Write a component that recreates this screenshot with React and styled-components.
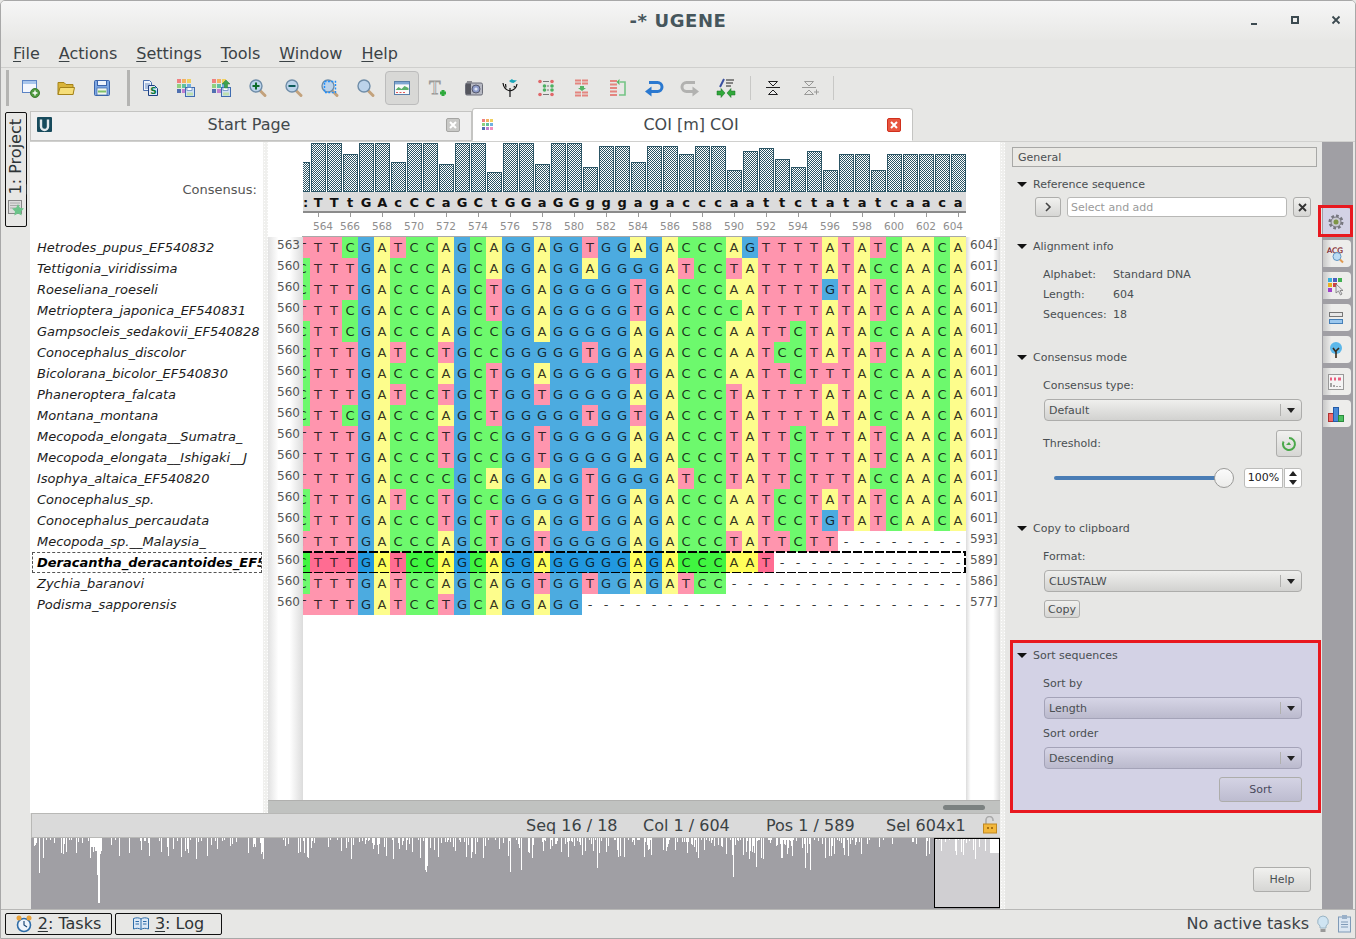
import React from "react";
import styled, { createGlobalStyle } from "styled-components";

const FONT = `"DejaVu Sans", "Liberation Sans", sans-serif`;

const sequences = [
  { name: "Hetrodes_pupus_EF540832", first: "T", seq: "TTCGATCCAGCAGGAGGTGGAGACCCAGTTTTATATCAACA", start: 563, end: 604 },
  { name: "Tettigonia_viridissima", first: "C", seq: "TTTGACCCAGCAGGAGGAGGGGATCCTATTTTATACCAACA", start: 560, end: 601 },
  { name: "Roeseliana_roeseli", first: "C", seq: "TTTGACCCAGCTGGAGGGGGTGACCCAATTTTGTATCAACA", start: 560, end: 601 },
  { name: "Metrioptera_japonica_EF540831", first: "T", seq: "TTCGACCCAGCTGGAGGGGGTGACCCCATTTTATATCAACA", start: 560, end: 601 },
  { name: "Gampsocleis_sedakovii_EF540828", first: "C", seq: "TTCGACCCAGCCGGAGGGGGAGACCCAATTCTATACCAACA", start: 560, end: 601 },
  { name: "Conocephalus_discolor", first: "C", seq: "TTTGATCCTGCCGGGGGTGGAGACCCAATCCTATATCAACA", start: 560, end: 601 },
  { name: "Bicolorana_bicolor_EF540830", first: "C", seq: "TTTGACCCAGCTGGAGGGGGTGACCCAATTCTTTACCAACA", start: 560, end: 601 },
  { name: "Phaneroptera_falcata", first: "C", seq: "TTTGATCCTGCTGGTGGGGGAGACCCTATTTTATACCAACA", start: 560, end: 601 },
  { name: "Montana_montana", first: "C", seq: "TTCGACCCAGCTGGGGGTGGTGACCCTATTTTATACCAACA", start: 560, end: 601 },
  { name: "Mecopoda_elongata__Sumatra_", first: "T", seq: "TTTGACCCTGCCGGTGGGGGAGACCCTATTCTTTATCAACA", start: 560, end: 601 },
  { name: "Mecopoda_elongata__Ishigaki__J", first: "T", seq: "TTTGACCCTGCCGGTGGGGGAGACCCTATTCTTTATCAACA", start: 560, end: 601 },
  { name: "Isophya_altaica_EF540820", first: "T", seq: "TTTGACCCCGCAGGAGGTGGGGATCCTATTCTTTACCAACA", start: 560, end: 601 },
  { name: "Conocephalus_sp.", first: "C", seq: "TTTGATCCTGCCGGGGGTGGAGACCCAATCCTATATCAACA", start: 560, end: 601 },
  { name: "Conocephalus_percaudata", first: "C", seq: "TTTGACCCTGCTGGAGGTGGAGACCCAATCCTGTATCAACA", start: 560, end: 601 },
  { name: "Mecopoda_sp.__Malaysia_", first: "T", seq: "TTTGACCCAGCTGGTGGGGGAGACCCTATTCTT--------", start: 560, end: 593 },
  { name: "Deracantha_deracantoides_EF5", first: "C", seq: "TTTGATCCAGCAGGAGGGGGAGACCCAAT------------", start: 560, end: 589, selected: true },
  { name: "Zychia_baranovi", first: "C", seq: "TTTGATCCAGCAGGTGGTGGAGATCC---------------", start: 560, end: 586 },
  { name: "Podisma_sapporensis", first: "T", seq: "TTTGATCCTGCAGGAGG------------------------", start: 560, end: 577 },
];

const consensus = "TTtGAcCCaGCtGGaGGgggagacccaattctatatcaaca";
const histogram = [49, 49, 38, 49, 49, 30, 49, 49, 28, 49, 49, 20, 49, 49, 28, 49, 49, 25, 46, 46, 30, 46, 46, 38, 46, 46, 22, 41, 44, 33, 25, 41, 22, 38, 38, 22, 38, 38, 38, 38, 38];

const cellColors = { A: "#fdfd8c", C: "#6df96d", G: "#4cabe0", T: "#ff95ae", "-": "#fff" };
const selectedColors = { A: "#ffff5a", C: "#40f540", G: "#2198e0", T: "#ff6c92", "-": "#fff" };

const GlobalStyle = createGlobalStyle`
  html, body { margin: 0; padding: 0; background: #e7e7e5; overflow: hidden; }
  * { box-sizing: border-box; }
  u { text-underline-offset: 2px; }
`;

const Window = styled.div`
  width: 1356px;
  height: 939px;
  display: flex;
  flex-direction: column;
  background: #e7e7e5;
  border: 1px solid #a8a8a8;
  border-radius: 5px 5px 0 0;
  font-family: ${FONT};
  color: #2e3436;
  overflow: hidden;
`;

const TitleBar = styled.div`
  flex: 0 0 39px;
  display: flex;
  align-items: center;
  justify-content: center;
  position: relative;
  background: linear-gradient(#f6f6f6, #e8e8e6);
  font-size: 18px;
  font-weight: 700;
  letter-spacing: 0.6px;
  color: #46565c;
`;

const WinControls = styled.div`
  position: absolute;
  right: 13px;
  top: 13px;
  display: flex;
  gap: 29px;
`;

const MenuBar = styled.div`
  flex: 0 0 27px;
  display: flex;
  align-items: center;
  padding-left: 12px;
  gap: 19px;
  font-size: 16px;
  color: #3b4245;
`;

const ToolBar = styled.div`
  flex: 0 0 41px;
  display: flex;
  align-items: center;
  padding-left: 5px;
  border-top: 1px solid #cfcfcd;
`;

const Handle = styled.div`
  width: 3px;
  height: 36px;
  background: #b4b4b2;
  margin: ${(p) => p.$margin};
`;

const ToolSep = styled.div`
  width: 1px;
  height: 24px;
  background: #c8c8c6;
  margin: ${(p) => p.$margin};
`;

const ToolButton = styled.div`
  width: 34px;
  height: 34px;
  margin: 0 1px;
  display: flex;
  align-items: center;
  justify-content: center;
  border-radius: 4px;
  border: 1px solid ${(p) => (p.$checked ? "#bcbcbc" : "transparent")};
  background: ${(p) => (p.$checked ? "#d8d8d6" : "transparent")};
`;

const Workspace = styled.div`
  flex: 1;
  display: flex;
  min-height: 0;
`;

const LeftDock = styled.div`
  flex: 0 0 29px;
  padding: 4px 0 0 4px;
`;

const ProjectButton = styled.div`
  width: 22px;
  height: 115px;
  border: 1px solid #111;
  border-radius: 2px;
  display: flex;
  flex-direction: column;
  align-items: center;
  padding-top: 6px;
  gap: 5px;
  background: #e7e7e5;
`;

const VerticalLabel = styled.span`
  writing-mode: vertical-rl;
  transform: rotate(180deg);
  font-size: 16px;
  line-height: 20px;
  color: #2e3436;
`;

const Main = styled.div`
  flex: 1;
  display: flex;
  flex-direction: column;
  min-width: 0;
`;

const TabBar = styled.div`
  flex: 0 0 33px;
  display: flex;
  align-items: flex-end;
`;

const Tab = styled.div`
  width: ${(p) => (p.$active ? "441px" : "442px")};
  height: ${(p) => (p.$active ? "33px" : "30px")};
  display: flex;
  align-items: center;
  padding: ${(p) => (p.$active ? "0 11px 0 7px" : "0 11px 3px 6px")};
  font-size: 16px;
  color: #43494c;
  background: ${(p) => (p.$active ? "#fff" : "#efefef")};
  border: 1px solid #c4c4c2;
  border-bottom: ${(p) => (p.$active ? "1px solid #fff" : "1px solid #c4c4c2")};
  border-radius: ${(p) => (p.$active ? "3px 3px 0 0" : "0")};
`;

const TabLabel = styled.span`
  flex: 1;
  text-align: center;
`;

const CloseBox = styled.div`
  width: 14px;
  height: 14px;
  border-radius: 2px;
  display: flex;
  align-items: center;
  justify-content: center;
  background: ${(p) => (p.$red ? "#e8553f" : "#c9c9c7")};
  border: 1px solid ${(p) => (p.$red ? "#d0301c" : "#a5a5a3")};
`;

const ContentRow = styled.div`
  flex: 1;
  display: flex;
  min-height: 0;
  border-top: 1px solid #d0d0ce;
`;

const Editor = styled.div`
  flex: none;
  width: 970px;
  display: flex;
  flex-direction: column;
`;

const AlignmentArea = styled.div`
  flex: 0 0 671px;
  display: flex;
  background: #fff;
`;

const NamesPanel = styled.div`
  flex: none;
  width: 233px;
  overflow: hidden;
  display: flex;
  flex-direction: column;
  background: #fff;
`;

const ConsensusLabel = styled.div`
  flex: 0 0 95px;
  display: flex;
  align-items: center;
  justify-content: flex-end;
  padding: 0 6px 0 0;
  font-size: 13px;
  color: #555;
`;

const NameRow = styled.div`
  height: 21px;
  line-height: 19px;
  font-size: 13px;
  font-style: italic;
  font-weight: ${(p) => (p.$selected ? 700 : 400)};
  color: ${(p) => (p.$selected ? "#000" : "#1c1c1c")};
  overflow: hidden;
  white-space: nowrap;
  padding-left: ${(p) => (p.$selected ? "4px" : "7px")};
  margin: ${(p) => (p.$selected ? "0 1px 0 2px" : "0")};
  border: 1px ${(p) => (p.$selected ? "dashed #555" : "solid transparent")};
  border-left-width: ${(p) => (p.$selected ? "1px" : "0")};
  border-right-width: ${(p) => (p.$selected ? "1px" : "0")};
`;

const VSplitter = styled.div`
  flex: 0 0 5px;
  background-color: #f0f0ee;
  background-image: radial-gradient(#fff 40%, transparent 45%);
  background-size: 3px 3px;
`;

const SeqArea = styled.div`
  flex: 1;
  display: flex;
  flex-direction: column;
  min-width: 0;
`;

const SeqHeader = styled.div`
  flex: 0 0 95px;
  padding-left: 35px;
  width: 698px;
`;

const Histogram = styled.div`
  height: 50px;
  display: flex;
  align-items: flex-end;
  gap: 1px;
`;

const Bar = styled.div`
  flex: 0 0 ${(p) => (p.$partial ? "7px" : "15px")};
  height: ${(p) => p.$h}px;
  border: 1px solid #2c5565;
  border-left-width: ${(p) => (p.$partial ? 0 : "1px")};
  background: repeating-conic-gradient(#2c5565 0 25%, #fff 0 50%) 0 0 / 2px 2px;
`;

const ConsensusRow = styled.div`
  height: 21px;
  display: flex;
  background: #dcdcdc;
  border-bottom: 2px solid #8b8b8b;
  font-size: 13px;
  font-weight: 700;
  color: #111;
`;

const ConsensusCell = styled.div`
  flex: 0 0 ${(p) => (p.$partial ? "7px" : "16px")};
  height: 19px;
  line-height: 21px;
  text-align: ${(p) => (p.$partial ? "right" : "center")};
  padding-right: ${(p) => (p.$partial ? "2px" : "0")};
`;

const Ruler = styled.div`
  height: 24px;
  display: flex;
  border-bottom: 1px solid #a8a8a8;
  margin-left: -1px;
`;

const RulerMark = styled.div`
  flex: 0 0 32px;
  position: relative;
  text-align: center;
  font-size: 10.5px;
  line-height: 10px;
  padding-top: 8px;
  color: #8e8e8e;
  &::before {
    content: "";
    position: absolute;
    left: 16px;
    top: 0;
    width: 1px;
    height: 4px;
    background: #9a9a9a;
  }
`;

const RulerText = styled.span`
  display: inline-block;
  transform: translateX(${(p) => p.$shift || 0}px);
`;

const SeqBody = styled.div`
  flex: 1;
  display: flex;
  flex-direction: column;
  background-image:
    linear-gradient(90deg, #e2e2e2, #fff 30%, #fff 62%, #dcdcdc),
    linear-gradient(90deg, #dcdcdc, #fff 14%, #fff 80%, #dcdcdc);
  background-size: 35px 100%, 34px 100%;
  background-position: 0 0, 698px 0;
  background-repeat: no-repeat;
`;

const SeqRow = styled.div`
  height: 21px;
  display: flex;
  position: relative;
`;

const SelectionOutline = styled.div`
  position: absolute;
  left: 35px;
  width: 663px;
  top: -1px;
  bottom: -1px;
  pointer-events: none;
  background-image:
    repeating-linear-gradient(90deg, #000 0 9px, transparent 9px 11px),
    repeating-linear-gradient(90deg, #000 0 9px, transparent 9px 11px),
    repeating-linear-gradient(0deg, #000 0 7px, transparent 7px 9px);
  background-size: 100% 2px, 100% 2px, 2px 100%;
  background-position: 0 0, 0 100%, 100% 0;
  background-repeat: no-repeat;
`;

const PosLabel = styled.div`
  flex: 0 0 ${(p) => (p.$end ? "34px" : "35px")};
  height: 17px;
  line-height: 17px;
  font-size: 12px;
  color: #555;
  text-align: ${(p) => (p.$end ? "left" : "right")};
  padding: ${(p) => (p.$end ? "0 0 0 4px" : "0 3px 0 0")};
`;

const Cell = styled.div`
  flex: 0 0 ${(p) => (p.$partial ? "7px" : "16px")};
  height: 21px;
  display: flex;
  justify-content: flex-end;
  overflow: hidden;
  font-size: 13px;
  line-height: 21px;
  color: rgba(10, 10, 10, 0.84);
  background: ${(p) => (p.$selected ? selectedColors : cellColors)[p.$base]};
`;

const CellLetter = styled.span`
  flex: 0 0 16px;
  text-align: center;
`;

const HScroll = styled.div`
  flex: 0 0 13px;
  background: #c0c2c0;
  border-top: 1px solid #b0b0ae;
  display: flex;
  align-items: center;
  justify-content: flex-end;
  padding-right: 15px;
`;

const ScrollThumb = styled.div`
  width: 42px;
  height: 5px;
  border-radius: 3px;
  background: #7b8180;
`;

const StatusStrip = styled.div`
  flex: 0 0 24px;
  margin-left: 1px;
  display: flex;
  align-items: center;
  padding: 0 0 1px 494px;
  background: #dadada;
  border-top: 1px solid #b8b8b6;
  border-left: 1px solid #b8b8b6;
  font-size: 16px;
  color: #3b4245;
`;

const StatusItem = styled.span`
  flex: 0 0 ${(p) => p.$w}px;
  white-space: nowrap;
`;

const Overview = styled.div`
  flex: 1;
  margin-left: 1px;
  background: #a09fa4;
  border-top: 1px solid #b8b8b6;
  position: relative;
  overflow: hidden;
`;

const OverviewChart = styled.svg`
  display: block;
`;

const PanelSplitter = styled(VSplitter)`
  background-color: #efefed;
`;

const OptionsPanel = styled.div`
  flex: 0 0 317px;
  display: flex;
  flex-direction: column;
  font-size: 11px;
  color: #4a4f52;
  background: #e7e7e5;
`;

const GroupTitle = styled.div`
  margin: 5px 5px 8px 7px;
  height: 20px;
  line-height: 19px;
  padding-left: 5px;
  border: 1px solid #a8a8a6;
  background: #eae9e5;
`;

const Section = styled.section`
  flex: 0 0 ${(p) => p.$h}px;
  padding: 0 20px 0 12px;
`;

const SortSection = styled.section`
  flex: 0 0 173px;
  margin: 0 1px 0 5px;
  border: 3px solid #e8181f;
  background: #d3d2e5;
  padding: 3px 16px 0 4px;
`;

const SectionHead = styled.div`
  height: 18px;
  display: flex;
  align-items: center;
  gap: 6px;
`;

const Triangle = styled.i`
  width: 0;
  height: 0;
  border-left: 5px solid transparent;
  border-right: 5px solid transparent;
  border-top: 5px solid #111;
`;

const RefRow = styled.div`
  display: flex;
  gap: 6px;
  margin: 4px -9px 0 18px;
`;

const GradientButton = styled.div`
  display: flex;
  align-items: center;
  justify-content: center;
  height: ${(p) => p.$h || 20}px;
  width: ${(p) => p.$w}px;
  flex: none;
  border: 1px solid #adadab;
  border-radius: 3px;
  color: ${(p) => (p.$tint ? "#4a4a5c" : "#4a4f52")};
  background: ${(p) => (p.$tint ? "linear-gradient(#d4d3e4, #bdbcd0)" : "linear-gradient(#f1f1ef, #d6d6d4)")};
`;

const TextBox = styled.div`
  flex: 1;
  height: 20px;
  line-height: 19px;
  padding-left: 3px;
  background: #fff;
  border: 1px solid #b8b8b6;
  border-radius: 3px;
  color: #9a9a9a;
`;

const InfoGrid = styled.div`
  margin: 9px 0 0 26px;
  display: grid;
  grid-template-columns: 70px 1fr;
  grid-auto-rows: 20px;
  align-items: center;
`;

const FieldLabel = styled.div`
  height: 20px;
  line-height: 21px;
  margin-left: 26px;
  margin-top: ${(p) => p.$top || 0}px;
`;

const Combo = styled.div`
  height: ${(p) => p.$h || 22}px;
  margin: ${(p) => p.$top || 0}px 0 0 27px;
  display: flex;
  align-items: center;
  padding-left: 4px;
  border: 1px solid ${(p) => (p.$tint ? "#a4a3b8" : "#adadab")};
  border-radius: 4px;
  background: ${(p) => (p.$tint ? "linear-gradient(#d6d5e6, #bbbacd)" : "linear-gradient(#efefed, #d2d2d0)")};
`;

const ComboText = styled.span`
  flex: 1;
`;

const ComboArrow = styled.div`
  flex: 0 0 21px;
  height: 12px;
  border-left: 1px solid #b0b0ae;
  display: flex;
  align-items: center;
  justify-content: center;
`;

const ThresholdRow = styled.div`
  display: flex;
  justify-content: space-between;
  align-items: center;
  height: 27px;
  margin: 9px 0 0 0;
  padding-left: 26px;
`;

const SliderRow = styled.div`
  display: flex;
  align-items: center;
  height: 20px;
  margin: 11px 0 0 37px;
`;

const SliderTrack = styled.div`
  flex: 0 0 170px;
  height: 4px;
  border-radius: 2px;
  background: #4a7db5;
`;

const SliderKnob = styled.div`
  flex: none;
  width: 20px;
  height: 20px;
  margin-left: -10px;
  border-radius: 50%;
  border: 1px solid #9a9a98;
  background: linear-gradient(#fbfbfb, #ececea);
`;

const SpinBox = styled.div`
  flex: 0 0 39px;
  height: 20px;
  margin-left: 10px;
  border: 1px solid #bcbcba;
  border-radius: 3px 0 0 3px;
  background: #fff;
  color: #222;
  line-height: 18px;
  text-align: center;
`;

const SpinArrows = styled.div`
  flex: 0 0 18px;
  height: 20px;
  margin-left: 1px;
  border: 1px solid #bcbcba;
  border-radius: 0 3px 3px 0;
  background: #fff;
  display: flex;
  flex-direction: column;
  align-items: center;
  justify-content: space-around;
`;

const ArrowUp = styled.i`
  border-left: 4px solid transparent;
  border-right: 4px solid transparent;
  border-bottom: 5px solid #222;
`;

const ArrowDown = styled.i`
  border-left: 4px solid transparent;
  border-right: 4px solid transparent;
  border-top: 5px solid #222;
`;

const SmallButtonRow = styled.div`
  margin: ${(p) => p.$top}px 0 0 27px;
  display: flex;
  justify-content: ${(p) => (p.$end ? "flex-end" : "flex-start")};
`;

const HelpRow = styled.div`
  margin-top: auto;
  padding: 0 11px 17px 0;
  display: flex;
  justify-content: flex-end;
`;

const TabStrip = styled.div`
  flex: 0 0 31px;
  background: #a09fa4;
  padding: 66px 2px 0 1px;
  display: flex;
  flex-direction: column;
  gap: 5px;
`;

const StripTab = styled.div`
  height: 27px;
  position: relative;
  display: flex;
  align-items: center;
  justify-content: center;
  padding-right: 2px;
  border-radius: 0 4px 4px 0;
  background: ${(p) => (p.$active ? "#d3d2e5" : "linear-gradient(90deg, #c8c8c8, #ededeb 30%, #ededeb)")};
  &::after {
    content: "";
    display: ${(p) => (p.$active ? "block" : "none")};
    position: absolute;
    left: -5px;
    right: -2px;
    top: -3px;
    bottom: -2px;
    border: 3px solid #e8181f;
  }
`;

const EdgeGap = styled.div`
  flex: 0 0 2px;
`;

const BottomBar = styled.div`
  flex: 0 0 29px;
  display: flex;
  align-items: flex-start;
  padding: 3px 3px 0 4px;
  gap: 3px;
  font-size: 16px;
  color: #2e3436;
  border-top: 1px solid #b8b8b6;
`;

const DockButton = styled.div`
  width: ${(p) => p.$w}px;
  height: 22px;
  border: 1px solid #111;
  border-radius: 2px;
  display: flex;
  align-items: center;
  justify-content: center;
  gap: 6px;
  line-height: 20px;
`;

const BottomStatus = styled.div`
  margin-left: auto;
  height: 21px;
  display: flex;
  align-items: center;
  gap: 7px;
  color: #3b4245;
`;

/* ---------- icons ---------- */

const Ico = ({ size = 22, vb = 22, children }) => (
  <svg width={size} height={size} viewBox={`0 0 ${vb} ${vb}`} fill="none">
    {children}
  </svg>
);

const MiniGrid = ({ x = 0, y = 0, s = 4 }) => {
  const colors = ["#f08080", "#f4b060", "#f0d060", "#90d080", "#60c0a0", "#70b0e0", "#5070b0", "#c080d0", "#f090c0"];
  return colors.map((c, i) => (
    <rect key={i} x={x + (i % 3) * (s + 1)} y={y + Math.floor(i / 3) * (s + 1)} width={s} height={s} fill={c} />
  ));
};

const Floppy = ({ x, y }) => (
  <g transform={`translate(${x} ${y})`}>
    <rect x="0.5" y="0.5" width="9" height="9" fill="#cfe0f4" stroke="#3f6cb0" />
    <rect x="2" y="0.5" width="5" height="3" fill="#fff" stroke="#3f6cb0" strokeWidth="0.6" />
    <rect x="2" y="5.5" width="6" height="3" fill="#bfe0b0" />
  </g>
);

const Lens = ({ children }) => (
  <>
    <line x1="12.5" y1="13" x2="18" y2="18.5" stroke="#c3a27c" strokeWidth="3" strokeLinecap="round" />
    <circle cx="9" cy="9" r="6" fill="#bcd3ea" stroke="#6f8da8" strokeWidth="1.4" />
    {children}
  </>
);

const NewWindowIcon = () => (
  <Ico>
    <rect x="3.5" y="3.5" width="14" height="12" fill="#f4f7fd" stroke="#5c84c4" />
    <rect x="4" y="4" width="13" height="3" fill="#a9c6ec" />
    <circle cx="16" cy="16" r="4.5" fill="#4f9a3f" stroke="#3d7d30" />
    <path d="M16 13.6v4.8M13.6 16h4.8" stroke="#fff" strokeWidth="1.4" />
  </Ico>
);
const FolderIcon = () => (
  <Ico>
    <path d="M3 5.5h6l2 2h7v10H3z" fill="#d9b43a" stroke="#a5831a" />
    <path d="M3 17.5l2-7h14.5l-1.5 7z" fill="#f6de78" stroke="#a5831a" />
  </Ico>
);
const SaveIcon = () => (
  <Ico>
    <rect x="3.5" y="3.5" width="15" height="15" rx="1" fill="#7ea7e2" stroke="#3b64aa" />
    <rect x="6.5" y="3.5" width="9" height="5" fill="#eef3fb" stroke="#3b64aa" />
    <rect x="6" y="11" width="10" height="7" fill="#f2f7ee" stroke="#3b64aa" strokeWidth="0.7" />
    <rect x="7" y="13.5" width="8" height="2" fill="#7fc06a" />
  </Ico>
);
const SeqCopyIcon = () => (
  <Ico>
    <path d="M4.5 3.5h6l2 2v8h-8z" fill="#eef4fc" stroke="#4b6fae" />
    <path d="M6 7h5M6 9h5M6 11h5" stroke="#6d8cc0" />
    <path d="M9.5 8.5h6l3 3v7h-9z" fill="#dfe9f7" stroke="#1d3f80" />
    <text x="11.2" y="17.4" fontSize="9" fontWeight="700" fontFamily={FONT} fill="#0d7a3a">S</text>
  </Ico>
);
const GridSaveIcon = () => (
  <Ico>
    <MiniGrid x={2} y={2} />
    <Floppy x={10} y={10} />
  </Ico>
);
const GridUploadIcon = () => (
  <Ico>
    <MiniGrid x={1} y={2} />
    <Floppy x={10} y={10} />
    <path d="M13.5 11V7H11l4-4 4 4h-2.5v4z" fill="#3fa34d" stroke="#2a7d38" strokeWidth="0.5" />
  </Ico>
);
const ZoomInIcon = () => (
  <Ico>
    <Lens>
      <path d="M9 5.5v7M5.5 9h7" stroke="#0d6b28" strokeWidth="2" />
    </Lens>
  </Ico>
);
const ZoomOutIcon = () => (
  <Ico>
    <Lens>
      <path d="M5.5 9h7" stroke="#0d5b5b" strokeWidth="2" />
    </Lens>
  </Ico>
);
const ZoomRectIcon = () => (
  <Ico>
    <Lens>
      <rect x="5.5" y="4.5" width="11" height="11" stroke="#1e90ff" strokeWidth="1.4" strokeDasharray="2 1.4" />
    </Lens>
  </Ico>
);
const ZoomPlainIcon = () => (
  <Ico>
    <Lens />
  </Ico>
);
const OverviewIcon = () => (
  <Ico>
    <rect x="3.5" y="4.5" width="15" height="13" fill="#fafafa" stroke="#5a7fa8" />
    <rect x="4" y="5" width="14" height="2.4" fill="#7fa6d2" />
    <path d="M4.5 13l3-3 3 2 3-3 4 2v2h-13z" fill="#5bb06b" />
    <path d="M5 15.5h2M8.5 15.5h2M12 15.5h2" stroke="#e25a5a" />
  </Ico>
);
const AddTextIcon = () => (
  <Ico>
    <text x="2" y="17" fontSize="19" fontFamily='"Liberation Serif", serif' fill="#f0f0ee" stroke="#9a9a98" strokeWidth="0.8">T</text>
    <path d="M13 16h6M16 13v6" stroke="#2faa3c" strokeWidth="3" />
  </Ico>
);
const CameraIcon = () => (
  <Ico>
    <rect x="2.5" y="6" width="17" height="12" rx="1.5" fill="#b6b8c2" stroke="#6b6d78" />
    <rect x="3" y="6.5" width="5" height="11" fill="#55565e" />
    <circle cx="13" cy="12" r="4" fill="#8d9bc8" stroke="#565a6e" />
    <circle cx="13" cy="12" r="1.6" fill="#dde4f6" />
    <rect x="4" y="4" width="5" height="2" fill="#8a8a90" />
  </Ico>
);
const TreeIcon = () => (
  <Ico>
    <path d="M11 20v-9M11 14C7 13 4.5 11 4 6M11 14c4-1 6.5-3 7-7M7 10.5L6.5 7M15 10.5L15.5 9" stroke="#111" strokeWidth="1.2" />
    <path d="M10 4l3-2 1 1 4 .5-3.5 2.5-2.5-.5z" fill="#1aa6b8" />
  </Ico>
);
const RowsDotsIcon = () => (
  <Ico>
    <g fill="#e0686a">
      <circle cx="5" cy="4.5" r="1.8" /><circle cx="17" cy="4.5" r="1.8" />
      <circle cx="5" cy="17.5" r="1.8" /><circle cx="17" cy="17.5" r="1.8" />
    </g>
    <g fill="#4cb060">
      <circle cx="9.5" cy="9" r="1.8" /><circle cx="17" cy="9" r="1.8" />
      <circle cx="9.5" cy="13" r="1.8" /><circle cx="17" cy="13" r="1.8" />
    </g>
    <path d="M8 4.5h6M8 17.5h6M12 9h2M12 13h2" stroke="#777" />
  </Ico>
);
const RowsDownIcon = () => (
  <Ico>
    <path d="M4 3.5h14M4 6.5h14M4 15.5h14M4 18.5h14" stroke="#e4857f" strokeWidth="2" strokeDasharray="6 1" />
    <path d="M9 9h4v2h2l-4 3-4-3h2z" fill="#55b565" />
  </Ico>
);
const RowsUpIcon = () => (
  <Ico>
    <path d="M3 4h7M3 7.5h7M3 11h7M3 14.5h7M3 18h7" stroke="#e4857f" strokeWidth="2" />
    <path d="M13 5h5v13h-6" stroke="#75c585" strokeWidth="1.6" />
    <path d="M12.5 2l-3 3 3 3z" fill="#55b565" />
  </Ico>
);
const UndoIcon = () => (
  <Ico>
    <path d="M6 5.5h8.5a4.5 4.5 0 0 1 0 9H8" stroke="#2b79d0" strokeWidth="3" />
    <path d="M8.5 9.5L2 14.5l6.5 5z" fill="#2b79d0" />
  </Ico>
);
const RedoIcon = () => (
  <Ico>
    <path d="M16 5.5H7.5a4.5 4.5 0 0 0 0 9H14" stroke="#b2b2b0" strokeWidth="3" />
    <path d="M13.5 9.5l6.5 5-6.5 5z" fill="#b2b2b0" />
  </Ico>
);
const SwapIcon = () => (
  <Ico>
    <path d="M11 3h8M11 6h7M11 9h5" stroke="#222" />
    <path d="M9 2L5 10" stroke="#3a50a0" strokeWidth="2" />
    <path d="M2 14h4v-2.5l4 4.5-4 4.5V18H2z" fill="#30a83a" stroke="#1b6f25" strokeWidth="0.5" />
    <path d="M20 14h-4v-2.5l-4 4.5 4 4.5V18h4z" fill="#30a83a" stroke="#1b6f25" strokeWidth="0.5" />
  </Ico>
);
const CollapseIcon = ({ gray }) => {
  const c = gray ? "#9a9a98" : "#222";
  return (
    <Ico>
      <path d="M4 10.5h14" stroke={c} />
      <path d="M6.5 4.5h9L11 9zM6.5 17.5h9L11 13z" stroke={c} fill={gray ? "none" : "#eee"} />
      {gray && <path d="M16 15h5M18.5 12.5v5" stroke={c} />}
    </Ico>
  );
};

const GearIcon = () => (
  <Ico size={20} vb={20}>
    <circle cx="10" cy="10" r="6" stroke="#77777f" strokeWidth="3" strokeDasharray="2.6 2" />
    <circle cx="10" cy="10" r="5" fill="#c9c9d2" stroke="#77777f" />
    <circle cx="10" cy="10" r="2.5" fill="#7d9545" />
  </Ico>
);
const FindPatternIcon = () => (
  <Ico size={20} vb={20}>
    <text x="1" y="8.5" fontSize="7.5" fontFamily={FONT} fill="#7a1020" stroke="#7a1020" strokeWidth="0.2">ACG</text>
    <circle cx="11" cy="12.5" r="4" fill="#bcdcf4" stroke="#5f95c4" />
    <path d="M14 15.5l3 3" stroke="#e09a50" strokeWidth="2" />
  </Ico>
);
const ColorSchemeIcon = () => (
  <Ico size={20} vb={20}>
    <rect x="2" y="2" width="4" height="4" fill="#3cb0d8" /><rect x="7" y="2" width="4" height="4" fill="#4a60c0" /><rect x="12" y="2" width="4" height="4" fill="#40b050" />
    <rect x="2" y="7" width="4" height="4" fill="#e8b020" /><rect x="7" y="7" width="4" height="4" fill="#d04040" />
    <rect x="2" y="12" width="4" height="4" fill="#a040c8" />
    <path d="M10 8l0 9 2.5-2 2 4 1.5-1-2-3.5 3 0z" fill="#e8e8ec" stroke="#777" strokeWidth="0.8" />
  </Ico>
);
const RowsPanelIcon = () => (
  <Ico size={20} vb={20}>
    <rect x="3.5" y="4.5" width="13" height="4" fill="#e8e8e8" stroke="#777" />
    <rect x="3.5" y="11.5" width="13" height="4" fill="#9cc8ee" stroke="#4680b8" />
  </Ico>
);
const TreePanelIcon = () => (
  <Ico size={20} vb={20}>
    <circle cx="10" cy="8" r="6" fill="#5cb8ea" />
    <path d="M10 18v-7M10 12L7 8M10 11l3-3" stroke="#3a2a1a" strokeWidth="1.6" />
  </Ico>
);
const TablePanelIcon = () => (
  <Ico size={20} vb={20}>
    <rect x="2.5" y="2.5" width="15" height="15" fill="#f4f4f4" stroke="#999" />
    <path d="M4 7h2M8 7h2M12 7h3" stroke="#e86080" strokeWidth="3" />
    <path d="M5 11v4M8 13v2M11 14v1M14 14v1" stroke="#888" strokeWidth="1.5" />
  </Ico>
);
const ChartPanelIcon = () => (
  <Ico size={20} vb={20}>
    <rect x="2.5" y="9.5" width="5" height="8" fill="#f06a6a" stroke="#b03030" />
    <rect x="7.5" y="3.5" width="5" height="14" fill="#4a8ad8" stroke="#245ca8" />
    <rect x="12.5" y="11.5" width="5" height="6" fill="#4cc060" stroke="#2a8a3c" />
  </Ico>
);

const stripIcons = [GearIcon, FindPatternIcon, ColorSchemeIcon, RowsPanelIcon, TreePanelIcon, TablePanelIcon, ChartPanelIcon];

const firstGroup = [NewWindowIcon, FolderIcon, SaveIcon];
const secondGroup = [SeqCopyIcon, GridSaveIcon, GridUploadIcon, ZoomInIcon, ZoomOutIcon, ZoomRectIcon, ZoomPlainIcon, OverviewIcon, AddTextIcon, CameraIcon, TreeIcon, RowsDotsIcon, RowsDownIcon, RowsUpIcon, UndoIcon, RedoIcon, SwapIcon];

/* overview: white spikes hanging from the top edge */
function overviewPath() {
  const deep = {
    8: 35, 12: 20, 59: 20, 66: 37, 67: 65, 68: 65, 118: 18, 137: 18, 394: 32, 395: 34, 396: 28, 479: 34, 490: 32, 566: 30,
    702: 39, 725: 29, 774: 30, 779: 32, 730: 20,
  };
  let seed = 77;
  const rnd = () => {
    seed = (seed * 1103 + 12345) % 65536;
    return seed / 65536;
  };
  let d = "";
  for (let x = 0; x < 970; x++) {
    let depth = 0;
    const r = rnd();
    const r2 = rnd();
    const odds = x > 390 && x < 830 ? 0.42 : 0.28;
    if (r < odds) depth = 2 + Math.floor(r2 * r2 * 20);
    if (x >= 60 && x <= 70) depth = Math.max(depth, 9 + (x > 63 ? 4 : 0));
    if (x > 958) depth = 15;
    if (deep[x]) depth = deep[x];
    if (depth) d += `M${x} 0h1v${depth}h-1z`;
  }
  return d;
}
const spikes = overviewPath();

function Combobox({ value, tint, top, h }) {
  return (
    <Combo $tint={tint} $top={top} $h={h}>
      <ComboText>{value}</ComboText>
      <ComboArrow>
        <ArrowDown />
      </ComboArrow>
    </Combo>
  );
}

function Sequence({ row }) {
  return (
    <SeqRow>
      <PosLabel>{row.start}</PosLabel>
      <Cell $partial $base={row.first} $selected={row.selected}>
        <CellLetter>{row.first}</CellLetter>
      </Cell>
      {row.seq.split("").map((b, i) => (
        <Cell key={i} $base={b} $selected={row.selected}>
          <CellLetter>{b}</CellLetter>
        </Cell>
      ))}
      <PosLabel $end>{row.end}]</PosLabel>
      {row.selected && <SelectionOutline />}
    </SeqRow>
  );
}

export default function App() {
  return (
    <>
      <GlobalStyle />
      <Window>
        <TitleBar>
          -* UGENE
          <WinControls>
            <svg width="12" height="12" viewBox="0 0 12 12"><path d="M3 10h6" stroke="#3c4a50" strokeWidth="2" /></svg>
            <svg width="12" height="12" viewBox="0 0 12 12"><rect x="3" y="3" width="6" height="6" fill="none" stroke="#3c4a50" strokeWidth="2" /></svg>
            <svg width="12" height="12" viewBox="0 0 12 12"><path d="M2.5 2.5l7 7M9.5 2.5l-7 7" stroke="#3c4a50" strokeWidth="1.8" /></svg>
          </WinControls>
        </TitleBar>
        <MenuBar>
          <span><u>F</u>ile</span>
          <span><u>A</u>ctions</span>
          <span><u>S</u>ettings</span>
          <span><u>T</u>ools</span>
          <span><u>W</u>indow</span>
          <span><u>H</u>elp</span>
        </MenuBar>
        <ToolBar>
          <Handle $margin="0 3px 0 0" />
          {firstGroup.map((Icon, i) => (
            <ToolButton key={i}><Icon /></ToolButton>
          ))}
          <Handle $margin="0 2px 0 7px" />
          {secondGroup.map((Icon, i) => (
            <ToolButton key={i} $checked={i === 7}>
              <Icon />
            </ToolButton>
          ))}
          <ToolSep $margin="0 4px 0 6px" />
          <ToolButton><CollapseIcon /></ToolButton>
          <ToolButton><CollapseIcon gray /></ToolButton>
          <ToolSep $margin="0 0 0 6px" />
        </ToolBar>
        <Workspace>
          <LeftDock>
            <ProjectButton>
              <VerticalLabel><u>1</u>: Project</VerticalLabel>
              <svg width="18" height="18" viewBox="0 0 18 18">
                <rect x="1.5" y="1.5" width="13" height="13" fill="#ddd" stroke="#888" />
                <path d="M3 4h10M3 6.5h10M3 9h10" stroke="#aaa" />
                <path d="M11 5l1.8 3.800 4.200.6-3 3 .7 4.100-3.700-2-3.700 2 .7-4.100-3-3 4.200-.6z" fill="#6cc48a" />
              </svg>
            </ProjectButton>
          </LeftDock>
          <Main>
            <TabBar>
              <Tab>
                <svg width="15" height="15" viewBox="0 0 15 15">
                  <rect width="15" height="15" rx="1" fill="#174a5c" />
                  <path d="M4 2.5v7a3.500 3.500 0 0 0 7 0v-7" fill="none" stroke="#e4e9ec" strokeWidth="2.4" />
                </svg>
                <TabLabel>Start Page</TabLabel>
                <CloseBox>
                  <svg width="8" height="8" viewBox="0 0 8 8"><path d="M1 1l6 6M7 1l-6 6" stroke="#fff" strokeWidth="2" /></svg>
                </CloseBox>
              </Tab>
              <Tab $active>
                <svg width="15" height="15" viewBox="0 0 15 15"><MiniGrid x={2} y={2} s={3} /></svg>
                <TabLabel>COI [m] COI</TabLabel>
                <CloseBox $red>
                  <svg width="8" height="8" viewBox="0 0 8 8"><path d="M1 1l6 6M7 1l-6 6" stroke="#fff" strokeWidth="2" /></svg>
                </CloseBox>
              </Tab>
            </TabBar>
            <ContentRow>
              <Editor>
                <AlignmentArea>
                  <NamesPanel>
                    <ConsensusLabel>Consensus:</ConsensusLabel>
                    {sequences.map((s) => (
                      <NameRow key={s.name} $selected={s.selected}>{s.name}</NameRow>
                    ))}
                  </NamesPanel>
                  <VSplitter />
                  <SeqArea>
                    <SeqHeader>
                      <Histogram>
                        <Bar $partial $h={30} />
                        {histogram.map((h, i) => (
                          <Bar key={i} $h={h} />
                        ))}
                      </Histogram>
                      <ConsensusRow>
                        <ConsensusCell $partial>:</ConsensusCell>
                        {consensus.split("").map((c, i) => (
                          <ConsensusCell key={i}>{c}</ConsensusCell>
                        ))}
                      </ConsensusRow>
                      <Ruler>
                        {Array.from({ length: 21 }, (_, i) => (
                          <RulerMark key={i}>
                            <RulerText $shift={i === 0 ? 5 : i === 20 ? -5 : 0}>{564 + i * 2}</RulerText>
                          </RulerMark>
                        ))}
                      </Ruler>
                    </SeqHeader>
                    <SeqBody>
                      {sequences.map((s) => (
                        <Sequence key={s.name} row={s} />
                      ))}
                    </SeqBody>
                    <HScroll>
                      <ScrollThumb />
                    </HScroll>
                  </SeqArea>
                </AlignmentArea>
                <StatusStrip>
                  <StatusItem $w={117}>Seq 16 / 18</StatusItem>
                  <StatusItem $w={123}>Col 1 / 604</StatusItem>
                  <StatusItem $w={120}>Pos 1 / 589</StatusItem>
                  <StatusItem $w={96}>Sel 604x1</StatusItem>
                  <svg width="16" height="18" viewBox="0 0 16 18">
                    <path d="M4 8V4a3.500 3.500 0 0 1 7 0v1" fill="none" stroke="#aaa" strokeWidth="1.6" />
                    <rect x="1.5" y="8" width="13" height="9" fill="#f2b73c" stroke="#c08820" />
                    <path d="M5 11h2v2H5zM9 11h2v2H9z" fill="#a87010" />
                  </svg>
                </StatusStrip>
                <Overview>
                  <OverviewChart width="969" height="70" viewBox="0 0 969 70">
                    <path d={spikes} fill="#fff" />
                    <rect x="903.5" y="0.5" width="65" height="69" fill="rgba(255,255,255,0.5)" stroke="#000" />
                  </OverviewChart>
                </Overview>
              </Editor>
              <PanelSplitter />
              <OptionsPanel>
                <GroupTitle>General</GroupTitle>
                <Section $h={62}>
                  <SectionHead><Triangle />Reference sequence</SectionHead>
                  <RefRow>
                    <GradientButton $w={26}>
                      <svg width="8" height="10" viewBox="0 0 8 10"><path d="M2 1l4 4-4 4" fill="none" stroke="#444" strokeWidth="1.6" /></svg>
                    </GradientButton>
                    <TextBox>Select and add</TextBox>
                    <GradientButton $w={18}>
                      <svg width="9" height="9" viewBox="0 0 9 9"><path d="M1 1l7 7M8 1l-7 7" stroke="#333" strokeWidth="1.8" /></svg>
                    </GradientButton>
                  </RefRow>
                </Section>
                <Section $h={111}>
                  <SectionHead><Triangle />Alignment info</SectionHead>
                  <InfoGrid>
                    <span>Alphabet:</span><span>Standard DNA</span>
                    <span>Length:</span><span>604</span>
                    <span>Sequences:</span><span>18</span>
                  </InfoGrid>
                </Section>
                <Section $h={171}>
                  <SectionHead><Triangle />Consensus mode</SectionHead>
                  <FieldLabel $top={9}>Consensus type:</FieldLabel>
                  <Combobox value="Default" top={4} />
                  <ThresholdRow>
                    Threshold:
                    <GradientButton $w={26} $h={27}>
                      <svg width="16" height="16" viewBox="0 0 16 16">
                        <path d="M8 2a6 6 0 1 1-5.500 3.500" fill="none" stroke="#4aa84a" strokeWidth="2" />
                        <path d="M5 9l3-3 2 3z" fill="#4aa84a" />
                      </svg>
                    </GradientButton>
                  </ThresholdRow>
                  <SliderRow>
                    <SliderTrack />
                    <SliderKnob />
                    <SpinBox>100%</SpinBox>
                    <SpinArrows><ArrowUp /><ArrowDown /></SpinArrows>
                  </SliderRow>
                </Section>
                <Section $h={121}>
                  <SectionHead><Triangle />Copy to clipboard</SectionHead>
                  <FieldLabel $top={9}>Format:</FieldLabel>
                  <Combobox value="CLUSTALW" top={4} />
                  <SmallButtonRow $top={8}>
                    <GradientButton $w={36} $h={18}>Copy</GradientButton>
                  </SmallButtonRow>
                </Section>
                <SortSection>
                  <SectionHead><Triangle />Sort sequences</SectionHead>
                  <FieldLabel $top={9}>Sort by</FieldLabel>
                  <Combobox value="Length" tint top={4} h={22} />
                  <FieldLabel $top={4}>Sort order</FieldLabel>
                  <Combobox value="Descending" tint top={4} h={22} />
                  <SmallButtonRow $top={8} $end>
                    <GradientButton $w={83} $h={25} $tint>Sort</GradientButton>
                  </SmallButtonRow>
                </SortSection>
                <HelpRow>
                  <GradientButton $w={58} $h={25}>Help</GradientButton>
                </HelpRow>
              </OptionsPanel>
              <TabStrip>
                {stripIcons.map((Icon, i) => (
                  <StripTab key={i} $active={i === 0}><Icon /></StripTab>
                ))}
              </TabStrip>
              <EdgeGap />
            </ContentRow>
          </Main>
        </Workspace>
        <BottomBar>
          <DockButton $w={107}>
            <svg width="16" height="18" viewBox="0 0 16 18">
              <circle cx="8" cy="10" r="6.5" fill="#eef4fb" stroke="#2d6ca8" strokeWidth="1.6" />
              <path d="M8 6v4l3 2" fill="none" stroke="#1e4a78" strokeWidth="1.2" />
              <circle cx="3" cy="3" r="2.5" fill="#e8a23a" /><circle cx="13" cy="3" r="2.5" fill="#e8a23a" />
            </svg>
            <span><u>2</u>: Tasks</span>
          </DockButton>
          <DockButton $w={107}>
            <svg width="16" height="14" viewBox="0 0 16 14">
              <path d="M0.5 1.5c3-1 5.500-1 7.500.5 2-1.500 4.500-1.500 7.500-.5V12c-3-1-5.500-1-7.500.5C6 11 3.500 11 .5 12z" fill="#dbe8f6" stroke="#2d6ca8" />
              <path d="M8 2v10M2.500 4.500h3.500M2.500 7h3.500M10 4.500h3.500M10 7h3.500" stroke="#2d6ca8" />
            </svg>
            <span><u>3</u>: Log</span>
          </DockButton>
          <BottomStatus>
            No active tasks
            <svg width="14" height="18" viewBox="0 0 14 18">
              <path d="M7 1a5.500 5.500 0 0 0-3 10v2h6v-2A5.500 5.500 0 0 0 7 1z" fill="#cfe4f2" stroke="#9ab4c4" />
              <rect x="4.5" y="14" width="5" height="3" fill="#999" />
            </svg>
            <svg width="15" height="19" viewBox="0 0 15 19">
              <rect x="1.5" y="3" width="12" height="15" fill="#dbe6f2" stroke="#7f9ab8" />
              <rect x="5" y="1" width="5" height="4" fill="#9ab0c8" />
              <path d="M4 8h7M4 10.5h7M4 13h7" stroke="#7f9ab8" />
            </svg>
          </BottomStatus>
        </BottomBar>
      </Window>
    </>
  );
}
